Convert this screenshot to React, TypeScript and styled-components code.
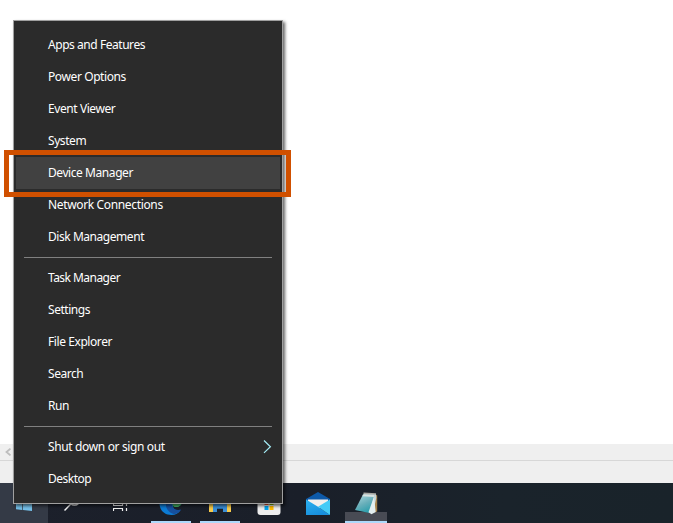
import React from 'react';
import styled, { createGlobalStyle } from 'styled-components';

const GlobalStyle = createGlobalStyle`
  * { box-sizing: border-box; }
  html, body { margin: 0; padding: 0; background: #fff; overflow: hidden; }
`;

const Desktop = styled.main`
  position: relative;
  display: flex;
  flex-direction: column;
  width: 673px;
  height: 523px;
  overflow: hidden;
  background: #fff;
  font-family: 'Noto Sans', 'Open Sans', sans-serif;
`;

const Canvas = styled.div`
  flex: 1;
`;

const ScrollTrack = styled.div`
  display: flex;
  align-items: center;
  height: 16px;
  padding-left: 4px;
  background: #efefef;
`;

const StatusBar = styled.div`
  height: 23px;
  background: #efefef;
  border-top: 1px solid #d7d7d7;
`;

const Taskbar = styled.nav`
  display: flex;
  height: 40px;
  background: linear-gradient(90deg, #1c202b 0%, #1a1f29 45%, #1a232b 75%, #19232a 100%);
`;

const TaskButton = styled.div<{ $start?: boolean }>`
  position: relative;
  display: flex;
  align-items: center;
  justify-content: center;
  width: ${(p) => (p.$start ? 48 : 49)}px;
  height: 40px;
  background: ${(p) => (p.$start ? '#343a46' : 'transparent')};
  svg { display: block; position: relative; }
`;

const Running = styled.span<{ $active?: boolean }>`
  position: absolute;
  left: ${(p) => (p.$active ? 3 : 5)}px;
  bottom: 0;
  width: ${(p) => (p.$active ? 42 : 40)}px;
  height: ${(p) => (p.$active ? 11 : 2)}px;
  background: ${(p) => (p.$active ? '#484b54' : 'transparent')};
  border-bottom: 2px solid #add9fb;
`;

const Menu = styled.ul`
  position: absolute;
  left: 13px;
  top: 20px;
  width: 270px;
  height: 484px;
  margin: 0;
  padding: 8px 2px;
  list-style: none;
  background: #2b2b2b;
  border: 1px solid #a0a0a0;
  box-shadow: 2px 2px 3px rgba(0, 0, 0, 0.6);
`;

const MenuItem = styled.li<{ $selected?: boolean; $tracking: number }>`
  display: flex;
  align-items: center;
  justify-content: space-between;
  height: 32px;
  padding: 0 8px 0 32px;
  background: ${(p) => (p.$selected ? '#414141' : 'transparent')};
  color: #fff;
  font-size: 12px;
  line-height: 16px;
  letter-spacing: ${(p) => p.$tracking}px;
  white-space: nowrap;
`;

const Separator = styled.li`
  height: 1px;
  margin: 4px 8px;
  background: #808080;
`;

const Highlight = styled.div`
  position: absolute;
  left: 4px;
  top: 150px;
  width: 287px;
  height: 47px;
  border: 5px solid #d05000;
`;

type Entry = { label: string; tracking: number; selected?: boolean; submenu?: boolean };

const groups: Entry[][] = [
  [
    { label: 'Apps and Features', tracking: -0.45 },
    { label: 'Power Options', tracking: -0.4 },
    { label: 'Event Viewer', tracking: -0.42 },
    { label: 'System', tracking: -0.42 },
    { label: 'Device Manager', tracking: -0.43, selected: true },
    { label: 'Network Connections', tracking: -0.35 },
    { label: 'Disk Management', tracking: -0.45 },
  ],
  [
    { label: 'Task Manager', tracking: -0.54 },
    { label: 'Settings', tracking: -0.45 },
    { label: 'File Explorer', tracking: -0.42 },
    { label: 'Search', tracking: -0.45 },
    { label: 'Run', tracking: -0.45 },
  ],
  [
    { label: 'Shut down or sign out', tracking: -0.36, submenu: true },
    { label: 'Desktop', tracking: -0.5 },
  ],
];

const SubmenuArrow = () => (
  <svg width="9" height="14" viewBox="0 0 9 14" fill="none">
    <path d="M1 .5 7.4 6.7 1 12.9" stroke="#a4ecf5" strokeWidth="1.2" />
  </svg>
);

const WindowsIcon = () => (
  <svg width="16" height="16" viewBox="0 0 16 16" fill="#75bfe8">
    <path d="M0 2.3 6.3 1.4V7.6H0ZM7 1.3 16 0V7.6H7ZM0 8.3H6.3V15L0 14.2ZM7 8.3H16V16L7 15.1Z" />
  </svg>
);

const SearchIcon = () => (
  <svg width="18" height="18" viewBox="0 0 18 18" fill="none" stroke="#f2f2f2" strokeWidth="1.5">
    <circle cx="10.5" cy="5.5" r="5.6" />
    <path d="M7 9.8.5 16.5" />
  </svg>
);

const TaskViewIcon = () => (
  <svg width="18" height="18" viewBox="0 0 18 18" fill="none" stroke="#f2f2f2" strokeWidth="1.2">
    <path d="M.5 2V.5h9V2M.5 4.5h9v7h-9zM0 14.5h10M.5 14.5V17M9.5 14.5V17M13.5 0v3M13.5 9v3M13.5 14v3" />
    <path d="M12.5 4.5h2v3h-2z" />
  </svg>
);

const EdgeIcon = () => (
  <svg width="24" height="24" viewBox="0 0 24 24">
    <path d="M.5 12C0 5 5 0 12 0s12 4 11.5 10c-.4 3-2 5-5 5-2 0-3.5-.6-4-1.5-2 3 2 7.5 7 5.5-2 3.5-5 5-9 5C5 24 .5 19 .5 12Z" fill="#0c7bd4" />
    <path d="M3 5C9-2 23-1 23.8 9c0 6-7 8-10 5 2-4-2-8-10.8-9Z" fill="#45b263" />
    <path d="M13 10h10c0 4-3 6.500-6 6-3 0-4-2-4-6Z" fill="#45b263" />
    <path d="M7 13c-.5 5 4 10 9 10 3-1 5-2.5 6-4.500-4.500 1.500-8.500-.5-9-5Z" fill="#164f9d" />
  </svg>
);

const ExplorerIcon = () => (
  <svg width="22" height="20" viewBox="0 0 22 20">
    <path d="M0 1h8l2 3h12v15H0z" fill="#f8cb4c" />
    <path d="M4 10h14v9h-4v-4H8v4H4z" fill="#3c8ed6" />
    <path d="M8 15h6v1H8z" fill="#236eaf" />
    <path d="M8 16h6v4H8z" fill="#1b2029" />
  </svg>
);

const StoreIcon = () => (
  <svg width="24" height="24" viewBox="0 0 24 24">
    <path d="M8 5V1h8v4" fill="none" stroke="#329de0" strokeWidth="2" />
    <path d="M.5 5h23v16q0 3-3 3h-17q-3 0-3-3Z" fill="#ededed" />
    <path d="M7.5 10h4v4h-4z" fill="#ef5027" />
    <path d="M12.5 10h4v4h-4z" fill="#7fba00" />
    <path d="M7.5 15h4v4h-4z" fill="#00a4ef" />
    <path d="M12.5 15h4v4h-4z" fill="#ffb900" />
  </svg>
);

const MailIcon = () => (
  <svg width="24" height="23" viewBox="0 0 24 23">
    <defs>
      <linearGradient id="envelope" x1="0" y1="0" x2=".5" y2="1">
        <stop stopColor="#2cb1ee" />
        <stop offset="1" stopColor="#188fdd" />
      </linearGradient>
    </defs>
    <path d="M0 7 12 0l12 7v3H0Z" fill="#0d59a8" />
    <path d="M2 7.5h20v3l-9 6-11-6Z" fill="#f1efed" />
    <path d="M0 7.5 12 14.8 24 23H0Z" fill="url(#envelope)" />
    <path d="m12 14.8 12-7.300V23Z" fill="#43cbf7" />
  </svg>
);

const NotepadIcon = () => (
  <svg width="24" height="23" viewBox="0 0 24 23">
    <defs>
      <linearGradient id="page" x1=".2" y1="0" x2=".7" y2="1">
        <stop stopColor="#a9d6dc" />
        <stop offset=".5" stopColor="#68afba" />
        <stop offset="1" stopColor="#249caa" />
      </linearGradient>
    </defs>
    <path d="m20 2 2.2 1.5v16L18 21Z" fill="#a7844c" />
    <path d="M8.5 2H21l.3 4-3.300 15-4-1Z" fill="#c8d5d7" />
    <path d="M8 2.5 19.5 3 14.5 21 0 18Z" fill="url(#page)" />
    <path d="M19 4.5 20.7 20l-4.200 2.300-3-2Z" fill="#e3eff0" />
    <path d="m8 2.5 11.5.5-.5 2L7.4 4.3Z" fill="#d9e2e1" />
    <path d="M8.5 1.2 21 2" stroke="#aaa9a4" strokeWidth="1.4" />
  </svg>
);

export default function App() {
  return (
    <>
      <GlobalStyle />
      <Desktop>
        <Canvas />
        <ScrollTrack>
          <svg width="8" height="8" viewBox="0 0 8 8" fill="none">
            <path d="M6.5.6 2.5 4l4 3.4" stroke="#bdbdbd" strokeWidth="1.8" />
          </svg>
        </ScrollTrack>
        <StatusBar />
        <Taskbar>
          <TaskButton $start><WindowsIcon /></TaskButton>
          <TaskButton><SearchIcon /></TaskButton>
          <TaskButton><TaskViewIcon /></TaskButton>
          <TaskButton><EdgeIcon /><Running /></TaskButton>
          <TaskButton><ExplorerIcon /><Running /></TaskButton>
          <TaskButton><StoreIcon /></TaskButton>
          <TaskButton><MailIcon /></TaskButton>
          <TaskButton><Running $active /><NotepadIcon /></TaskButton>
        </Taskbar>
        <Menu>
          {groups.map((group, index) => (
            <React.Fragment key={index}>
              {index > 0 && <Separator />}
              {group.map((item) => (
                <MenuItem key={item.label} $selected={item.selected} $tracking={item.tracking}>
                  <span>{item.label}</span>
                  {item.submenu && <SubmenuArrow />}
                </MenuItem>
              ))}
            </React.Fragment>
          ))}
        </Menu>
        <Highlight />
      </Desktop>
    </>
  );
}
